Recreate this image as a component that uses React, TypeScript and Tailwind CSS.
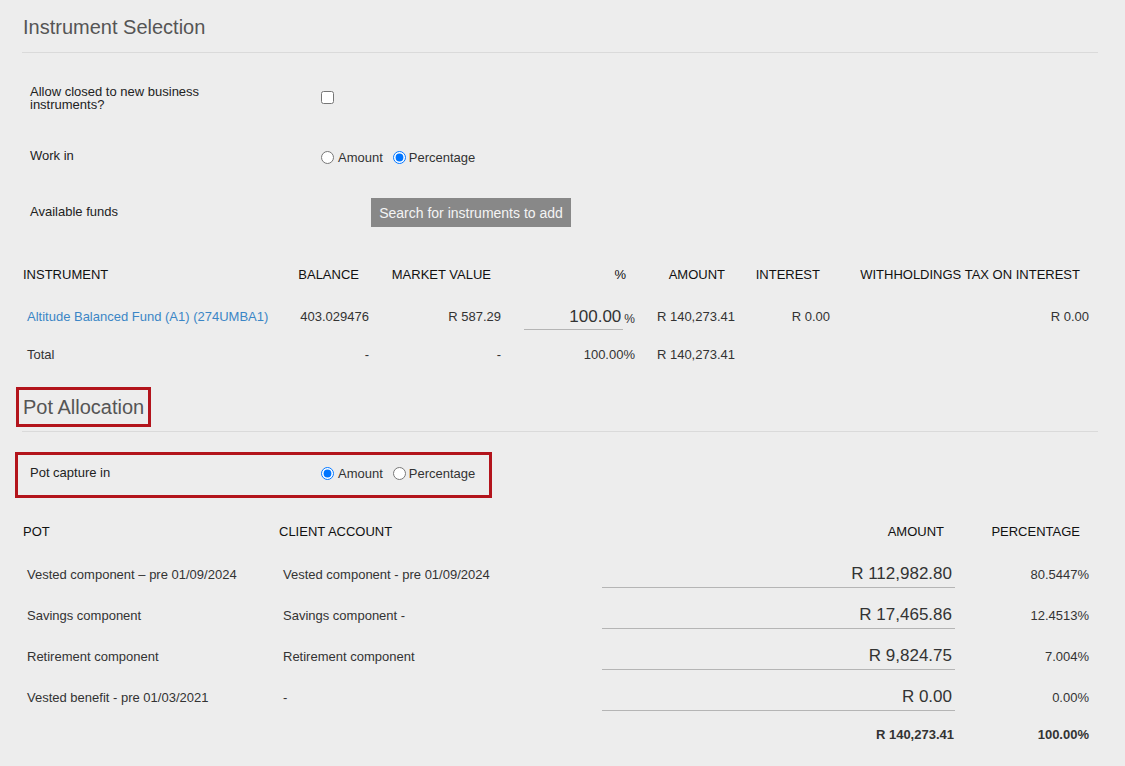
import React, { useState } from 'react';

interface Pot {
  name: string;
  account: string;
  amount: string;
  pct: string;
}

const pots: Pot[] = [
  { name: 'Vested component – pre 01/09/2024', account: 'Vested component - pre 01/09/2024', amount: 'R 112,982.80', pct: '80.5447%' },
  { name: 'Savings component', account: 'Savings component -', amount: 'R 17,465.86', pct: '12.4513%' },
  { name: 'Retirement component', account: 'Retirement component', amount: 'R 9,824.75', pct: '7.004%' },
  { name: 'Vested benefit - pre 01/03/2021', account: '-', amount: 'R 0.00', pct: '0.00%' }
];

const instrumentCols = 'grid grid-cols-[268px_88px_132px_134px_100px_95px_1fr]';
const potCols = 'grid grid-cols-[256px_319px_1fr_134px]';

const RadioPair: React.FC<{ name: string; value: 'amount' | 'percentage'; onChange: (v: 'amount' | 'percentage') => void }> = ({ name, value, onChange }) => (
  <div className="flex items-center text-[13px] text-[#333] leading-[16px]">
    <input
      type="radio"
      name={name}
      checked={value === 'amount'}
      onChange={() => onChange('amount')}
      className="m-0 w-[13px] h-[13px]"
    />
    <span className="ml-[4px] mt-[2px]">Amount</span>
    <input
      type="radio"
      name={name}
      checked={value === 'percentage'}
      onChange={() => onChange('percentage')}
      className="m-0 ml-[10px] w-[13px] h-[13px]"
    />
    <span className="ml-[3px] mt-[2px]">Percentage</span>
  </div>
);

const App: React.FC = () => {
  const [workIn, setWorkIn] = useState<'amount' | 'percentage'>('percentage');
  const [potIn, setPotIn] = useState<'amount' | 'percentage'>('amount');
  const [allowClosed, setAllowClosed] = useState(false);

  return (
    <div className="min-h-screen bg-[#ededed] font-['Liberation_Sans',Arial,sans-serif] text-[13px] text-[#333]">
      <div className="ml-[22px] mr-[27px]">
        {/* Instrument selection */}
        <div className="pt-[15px] pb-[13px] border-b border-[#dadada]">
          <h2 className="text-[20px] leading-[24px] text-[#555] pl-[1px]">Instrument Selection</h2>
        </div>

        <div className="mt-[31px] grid grid-cols-[291px_1fr] items-center pl-[8px] h-[26px]">
          <div className="w-[190px] leading-[13px] text-[#222] translate-y-[1px]">Allow closed to new business instruments?</div>
          <div className="flex items-center h-[26px]">
            <input
              type="checkbox"
              checked={allowClosed}
              onChange={() => setAllowClosed(!allowClosed)}
              className="m-0 w-[13px] h-[13px]"
            />
          </div>
        </div>

        <div className="mt-[38px] grid grid-cols-[291px_1fr] items-center pl-[8px] h-[16px]">
          <div className="text-[#222] leading-[16px] -mt-[2px]">Work in</div>
          <RadioPair name="workin" value={workIn} onChange={setWorkIn} />
        </div>

        <div className="mt-[34px] grid grid-cols-[291px_1fr] items-center pl-[8px] h-[29px]">
          <div className="text-[#222] -mt-[2px]">Available funds</div>
          <div>
            <button
              type="button"
              className="ml-[50px] w-[200px] h-[29px] bg-[#888888] text-[#f4f4f4] text-[14px] pt-[1px]"
            >
              Search for instruments to add
            </button>
          </div>
        </div>

        <div className="mt-[28px]">
          <div className={`${instrumentCols} h-[40px] items-center text-[#111] uppercase`}>
            <div className="pl-[1px]">Instrument</div>
            <div className="text-right pr-[19px]">Balance</div>
            <div className="text-right pr-[19px]">Market Value</div>
            <div className="text-right pr-[18px]">%</div>
            <div className="text-right pr-[19px]">Amount</div>
            <div className="text-right pr-[19px]">Interest</div>
            <div className="text-right pr-[18px]">Withholdings Tax on Interest</div>
          </div>
          <div className={`${instrumentCols} h-[44px] items-center`}>
            <div className="pl-[5px]">
              <a href="#" className="text-[#3b86c6]">Altitude Balanced Fund (A1) (274UMBA1)</a>
            </div>
            <div className="text-right pr-[9px]">403.029476</div>
            <div className="text-right pr-[9px]">R 587.29</div>
            <div className="flex items-center justify-end pr-[9px]">
              <input
                type="text"
                defaultValue="100.00"
                className="w-[99px] h-[26px] bg-transparent border-b border-[#b5b5b5] text-right pr-[2px] text-[17px] text-[#333] outline-none"
              />
              <span className="ml-[1px] mt-[4px] text-[12px]">%</span>
            </div>
            <div className="text-right pr-[9px]">R 140,273.41</div>
            <div className="text-right pr-[9px]">R 0.00</div>
            <div className="text-right pr-[9px]">R 0.00</div>
          </div>
          <div className={`${instrumentCols} h-[32px] items-center`}>
            <div className="pl-[5px]">Total</div>
            <div className="text-right pr-[9px]">-</div>
            <div className="text-right pr-[9px]">-</div>
            <div className="text-right pr-[9px]">100.00%</div>
            <div className="text-right pr-[9px]">R 140,273.41</div>
            <div />
            <div />
          </div>
        </div>

        {/* Pot allocation */}
        <div className="mt-[16px] pb-[4px] border-b border-[#dadada]">
          <div className="inline-block -ml-[6px] h-[40px] border-[3px] border-[#b3141c] pl-[4px] pr-[4px]">
            <h2 className="text-[20px] leading-[34px] text-[#555]">Pot Allocation</h2>
          </div>
        </div>

        <div className="mt-[20px] -ml-[7px] w-[477px] h-[46px] border-[3px] border-[#b3141c] pt-[9px]">
          <div className="grid grid-cols-[291px_1fr] items-center pl-[12px] h-[16px]">
            <div className="text-[#222] -mt-[1px]">Pot capture in</div>
            <RadioPair name="potin" value={potIn} onChange={setPotIn} />
          </div>
        </div>

        <div className="mt-[15px]">
          <div className={`${potCols} h-[38px] items-center text-[#111] uppercase`}>
            <div className="pl-[1px]">Pot</div>
            <div className="pl-[1px]">Client Account</div>
            <div className="text-right pr-[20px]">Amount</div>
            <div className="text-right pr-[18px]">Percentage</div>
          </div>
          <div className="mt-[3px]">
            {pots.map((pot) => (
              <div key={pot.name} className={`${potCols} h-[41px] items-center`}>
                <div className="pl-[5px]">{pot.name}</div>
                <div className="pl-[5px]">{pot.account}</div>
                <div className="flex justify-end pr-[9px]">
                  <input
                    type="text"
                    defaultValue={pot.amount}
                    className="w-[353px] h-[26px] bg-transparent border-b border-[#b5b5b5] text-right pr-[3px] text-[17px] text-[#333] outline-none"
                  />
                </div>
                <div className="text-right pr-[9px]">{pot.pct}</div>
              </div>
            ))}
          </div>
          <div className={`${potCols} h-[34px] items-center font-bold`}>
            <div />
            <div />
            <div className="text-right pr-[10px]">R 140,273.41</div>
            <div className="text-right pr-[9px]">100.00%</div>
          </div>
        </div>
      </div>
    </div>
  );
};

export default App;
